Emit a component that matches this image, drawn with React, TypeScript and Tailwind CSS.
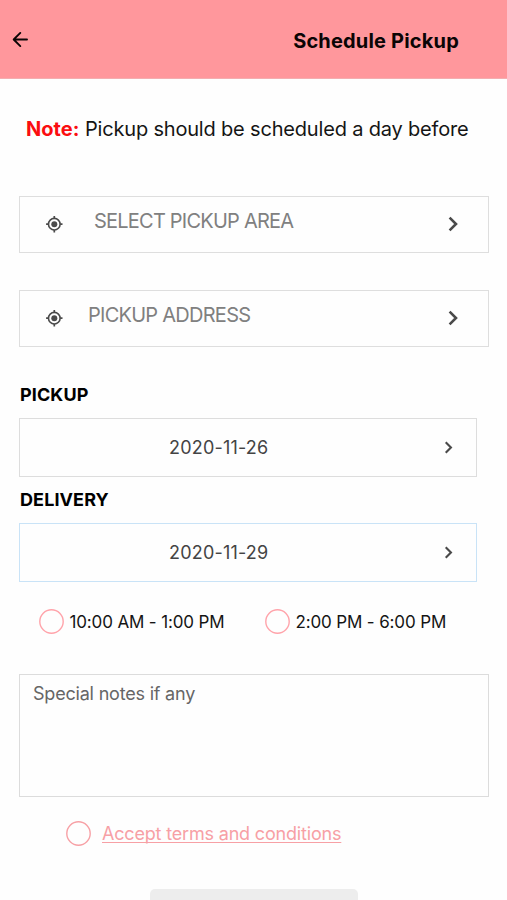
import React from "react";

function LocateIcon() {
  return (
    <svg width="18" height="18" viewBox="0 0 18 18" fill="none" stroke="#4a4a4a" className="mb-[2px] shrink-0">
      <circle cx="9.3" cy="9.2" r="5.8" strokeWidth="1.6" />
      <circle cx="9.3" cy="9.2" r="3" fill="#4a4a4a" stroke="none" />
      <path d="M9.3 1v2.4M9.3 15v2.4M1.1 9.2h2.4M15.1 9.2h2.4" strokeWidth="1.7" />
    </svg>
  );
}

function Chevron({ width, height, strokeWidth }: { width: number; height: number; strokeWidth: number }) {
  return (
    <svg width={width} height={height} viewBox="0 0 10 16" fill="none" stroke="#4a4a4a" strokeWidth={strokeWidth} className="mb-px shrink-0">
      <path d="M1.6 1.6L8 8L1.6 14.4" />
    </svg>
  );
}

function SelectRow({ label, labelClass }: { label: string; labelClass: string }) {
  return (
    <button className="flex h-[57px] w-[470px] items-center border border-[#dedede] pr-[30px] pl-[25px] text-left">
      <LocateIcon />
      <span className={`flex-1 pb-[7px] text-[20px] leading-6 whitespace-nowrap text-[#808080] ${labelClass}`}>{label}</span>
      <Chevron width={10} height={16} strokeWidth={2.6} />
    </button>
  );
}

function DateField({ label, value, borderClass }: { label: string; value: string; borderClass: string }) {
  return (
    <div className="flex w-[458px] flex-col">
      <span className="h-[34px] pl-px text-[18px] leading-[22px] font-bold tracking-[0.1px] text-black">{label}</span>
      <button className={`flex h-[59px] items-center border pr-[23px] text-left ${borderClass}`}>
        <span className="flex-1 pl-[149px] text-[18px] leading-6 tracking-[0.2px] text-[#444444]">{value}</span>
        <Chevron width={9} height={13} strokeWidth={2.6} />
      </button>
    </div>
  );
}

function Circle({ className }: { className: string }) {
  return (
    <svg width="25" height="25" viewBox="0 0 25 25" fill="none" strokeWidth="1.4" className={`shrink-0 ${className}`}>
      <circle cx="12.5" cy="12.5" r="11.7" />
    </svg>
  );
}

export default function App() {
  return (
    <div className="flex h-[900px] w-[507px] flex-col overflow-hidden bg-[#fefefe] font-['Inter','Liberation_Sans',sans-serif]">
      <header className="flex h-[79px] shrink-0 items-center justify-between border-b border-[#f3aeb0] bg-[#ff979c] pt-[2px] pr-[48px] pl-[12px]">
        <svg width="17" height="17" viewBox="0 0 17 17" fill="none" stroke="#0b0505" strokeWidth="1.9" strokeLinecap="round" strokeLinejoin="round" className="mb-[2px]">
          <path d="M15 8.5H2M8.3 1.9L1.7 8.5L8.3 15.1" />
        </svg>
        <h1 className="pt-px text-[20px] leading-6 font-bold tracking-[0.18px] text-[#0b0505]">Schedule Pickup</h1>
      </header>

      <main className="flex flex-1 flex-col pl-[19px]">
        <p className="mt-[37px] h-[26px] pl-[7px] text-[20px] leading-[26px] tracking-[-0.18px] whitespace-nowrap text-[#151515]">
          <strong className="font-bold tracking-[0.05px] text-[#fb0d10]">Note:</strong> Pickup should be scheduled a day before
        </p>

        <div className="mt-[54px] flex flex-col gap-[37px]">
          <SelectRow label="SELECT PICKUP AREA" labelClass="pl-[31px] tracking-[-0.78px]" />
          <SelectRow label="PICKUP ADDRESS" labelClass="pl-[25px] tracking-[-0.74px]" />
        </div>

        <div className="mt-[37px] flex flex-col gap-[12px]">
          <DateField label="PICKUP" value="2020-11-26" borderClass="border-[#dddddd]" />
          <DateField label="DELIVERY" value="2020-11-29" borderClass="border-[#c9e3f7]" />
        </div>

        <div className="mt-[27px] flex h-[25px] items-center text-[17px] tracking-[-0.14px] whitespace-nowrap text-[#151515]">
          <label className="flex w-[226px] items-center gap-[6px] pl-[19.5px]">
            <Circle className="stroke-[#ffa3aa]" />
            <span className="pt-[2px]">10:00 AM - 1:00 PM</span>
          </label>
          <label className="flex items-center gap-[6px] pl-[19.5px]">
            <Circle className="stroke-[#ffa3aa]" />
            <span className="pt-[2px]">2:00 PM - 6:00 PM</span>
          </label>
        </div>

        <textarea
          className="mt-[40px] block h-[123px] w-[470px] shrink-0 resize-none border border-[#dcdcdc] px-[13px] py-[7px] text-[18px] leading-6 tracking-[-0.2px] placeholder:text-[#666666]"
          placeholder="Special notes if any"
        />

        <label className="mt-[23px] flex h-[26px] items-center gap-[11px] pl-[47px] text-[18px] tracking-[-0.18px] text-[#f7a0a5]">
          <Circle className="stroke-[#f7a0a5]" />
          <span className="underline decoration-[1px] underline-offset-[2px] [text-decoration-skip-ink:none]">Accept terms and conditions</span>
        </label>

        <button className="mt-[43px] ml-[131px] h-[40px] w-[208px] shrink-0 rounded-[5px] bg-[#ededed]" aria-label="Continue" />
      </main>
    </div>
  );
}
